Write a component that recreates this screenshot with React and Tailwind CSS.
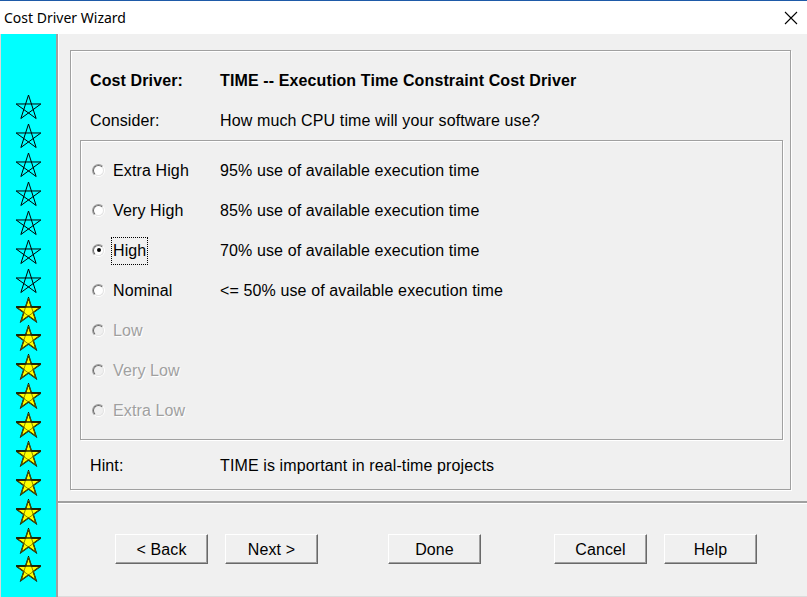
import React from "react";

const FONT = { fontFamily: '"Liberation Sans", Arial, sans-serif' };

function pts(cx, cy, R, r, n10) {
  const out = [];
  if (n10) {
    for (let k = 0; k < 10; k++) {
      const a = ((-90 + 36 * k) * Math.PI) / 180;
      const rad = k % 2 === 0 ? R : r;
      out.push([cx + rad * Math.cos(a), cy + rad * Math.sin(a)]);
    }
  } else {
    for (let k = 0; k < 5; k++) {
      const a = ((-90 + 72 * k) * Math.PI) / 180;
      out.push([cx + R * Math.cos(a), cy + R * Math.sin(a)]);
    }
  }
  return out;
}

function Star({ filled }) {
  const cx = 12.5, cy = 14, R = 13;
  const p = pts(cx, cy, R, 0, false);
  const order = [0, 2, 4, 1, 3];
  const d =
    order.map((i, j) => `${j === 0 ? "M" : "L"}${p[i][0].toFixed(2)} ${p[i][1].toFixed(2)}`).join(" ") + " Z";
  const outer = pts(cx, cy, R, R * 0.382, true)
    .map((q) => `${q[0].toFixed(2)},${q[1].toFixed(2)}`)
    .join(" ");
  return (
    <svg width="25" height="26" viewBox="0 0 25 26">
      {filled && <polygon points={outer} fill="#ffff00" stroke="#000" strokeWidth="1.3" strokeLinejoin="miter" />}
      <path d={d} fill="none" stroke={filled ? "#6b6b00" : "#000"} strokeWidth={filled ? 0.8 : 1} />
      {filled && (
        <line x1={p[4][0]} y1={p[4][1]} x2={p[1][0]} y2={p[1][1]} stroke="#000" strokeWidth="1" />
      )}
    </svg>
  );
}

function Radio({ checked, disabled }) {
  return (
    <div className="w-[13px] h-[13px] rounded-full border border-t-[#a0a0a0] border-l-[#a0a0a0] border-b-white border-r-white shrink-0">
      <div
        className={
          "w-full h-full rounded-full border border-t-[#696969] border-l-[#696969] border-b-[#e3e3e3] border-r-[#e3e3e3] flex items-center justify-center " +
          (disabled ? "bg-[#f0f0f0]" : "bg-white")
        }
      >
        {checked && <div className="w-[4px] h-[4px] rounded-full bg-black" />}
      </div>
    </div>
  );
}

function Button({ children, className = "" }) {
  return (
    <div
      className={
        "w-[93px] h-[30px] flex items-center justify-center pt-[1px] bg-[#f0f0f0] border-t border-l border-t-white border-l-white border-r border-b border-r-[#696969] border-b-[#696969] shadow-[inset_-1px_-1px_0_#a0a0a0] text-[16px] tracking-[0.12px] text-black " +
        className
      }
    >
      {children}
    </div>
  );
}

const options = [
  { label: "Extra High", desc: "95% use of available execution time" },
  { label: "Very High", desc: "85% use of available execution time" },
  { label: "High", desc: "70% use of available execution time", checked: true, focus: true },
  { label: "Nominal", desc: "<= 50% use of available execution time" },
  { label: "Low", disabled: true },
  { label: "Very Low", disabled: true },
  { label: "Extra Low", disabled: true },
];

export default function App() {
  const stars = [];
  for (let i = 0; i < 17; i++) stars.push(i >= 7);
  return (
    <div className="w-[807px] h-[597px] bg-[#f0f0f0] flex flex-col overflow-hidden" style={FONT}>
      {/* Title bar */}
      <div className="h-[34px] bg-white border-t border-[#1e5aa8] flex items-center justify-between shrink-0">
        <span
          className="pl-[4px] text-[14px] text-black leading-none"
          style={{ fontFamily: '"Noto Sans", "Segoe UI", sans-serif' }}
        >
          Cost Driver Wizard
        </span>
        <svg width="14" height="14" viewBox="0 0 14 14" className="mr-[9px]">
          <path d="M1 1 L13 13 M13 1 L1 13" stroke="#000" strokeWidth="1.1" />
        </svg>
      </div>
      {/* Body */}
      <div className="flex-1 flex flex-row min-h-0">
        <div className="w-[1px] bg-[#d8d8d8]" />
        <div className="w-[56px] bg-[#00ffff] flex flex-col items-center pt-[59px]">
          {stars.map((f, i) => (
            <div key={i} className="h-[28.875px] flex items-center justify-center shrink-0">
              <Star filled={f} />
            </div>
          ))}
        </div>
        <div className="w-[2px] bg-[#a0a0a0]" />
        <div className="flex-1 flex flex-col">
          {/* Upper panel */}
          <div className="h-[467px] shrink-0 pl-[11px] pr-[16px] pt-[16px] border-l border-l-white">
            <div className="w-[721px] h-[440px] border border-[#a0a0a0] shadow-[inset_1px_1px_0_#ffffff,1px_1px_0_#ffffff] flex flex-col pt-[9px] pl-[9px] text-[16px] tracking-[0.12px] text-black">
              <div className="h-[40px] flex items-center pl-[10px] pt-[2px] font-bold">
                <span className="w-[130px]">Cost Driver:</span>
                <span>TIME -- Execution Time Constraint Cost Driver</span>
              </div>
              <div className="h-[40px] flex items-center pl-[10px] pt-[2px]">
                <span className="w-[130px]">Consider:</span>
                <span>How much CPU time will your software use?</span>
              </div>
              <div className="w-[703px] h-[300px] border border-[#a0a0a0] shadow-[inset_1px_1px_0_#ffffff,1px_1px_0_#ffffff] pt-[9px]">
                {options.map((o) => (
                  <div key={o.label} className="h-[40px] flex items-center pl-[11px]">
                    <Radio checked={o.checked} disabled={o.disabled} />
                    <div className="w-[115px] pl-[8px] pt-[2px] flex items-center">
                      <span
                        className={
                          (o.focus ? "outline outline-1 outline-dotted outline-black outline-offset-0 px-[1px] -ml-[1px] py-[1px]" : "") +
                          (o.disabled ? " text-[#a0a0a0]" : "")
                        }
                        style={o.disabled ? { textShadow: "1px 1px 0 #ffffff" } : undefined}
                      >
                        {o.label}
                      </span>
                    </div>
                    {o.desc && <span className="pt-[2px]">{o.desc}</span>}
                  </div>
                ))}
              </div>
              <div className="h-[40px] mt-[5px] flex items-center pl-[10px] pt-[2px]">
                <span className="w-[130px]">Hint:</span>
                <span>TIME is important in real-time projects</span>
              </div>
            </div>
          </div>
          {/* Separator */}
          <div className="h-[2px] bg-[#a0a0a0] shadow-[0_1px_0_#ffffff] shrink-0" />
          {/* Button row */}
          <div className="flex-1 flex flex-row items-start pt-[31px] pl-[57px] border-b border-[#dcdcdc]">
            <Button>&lt; Back</Button>
            <Button className="ml-[17px]">Next &gt;</Button>
            <Button className="ml-[70px]">Done</Button>
            <Button className="ml-[73px]">Cancel</Button>
            <Button className="ml-[17px]">Help</Button>
          </div>
        </div>
      </div>
    </div>
  );
}
